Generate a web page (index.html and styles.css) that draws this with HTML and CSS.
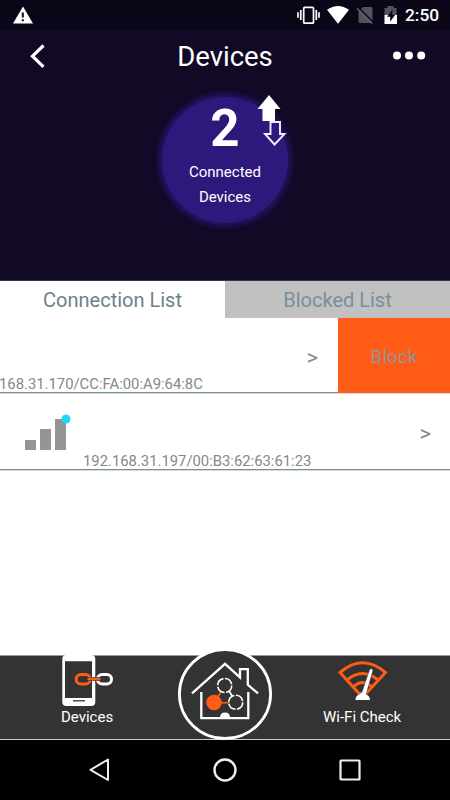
FILE: index.html
```html
<!DOCTYPE html>
<html lang="en">
<head>
<meta charset="utf-8">
<title>Devices</title>
<link rel="stylesheet" href="styles.css">
</head>
<body>
<div class="screen">
  <div class="status">
    <svg class="warn" width="20" height="18" viewBox="0 0 20 18"><path d="M10 .5 20 17.5H0z" fill="#fff"/><path d="M8.800 6.500h2v5h-2zM8.800 13.300h2v2h-2z" fill="#0a0618"/></svg>
    <svg class="tray" width="104" height="20" viewBox="297 5 104 20">
      <g fill="none" stroke="#fff" stroke-width="1.700"><rect x="303.700" y="7.400" width="9.800" height="15.800" rx="1"/><path d="M300.800 10v10M298 12.300v5.500M316.300 10v10M319 12.300v5.500"/></g>
      <path d="M327 9.800Q338 2 349 9.800L338 23.800z" fill="#fff"/>
      <path d="M363 7h8q1.500 0 1.500 1.500V23H360q-1.500 0-1.500-1.500v-10z" fill="#55515f"/><path d="m358 7 15 15" stroke="#0a0618" stroke-width="1.500"/><path d="m357 8.500 15 15" stroke="#625e6b" stroke-width="1.500"/>
      <path d="M384.500 8h3V6h6v2h3v7h-12z" fill="#55515f"/><path d="M384.500 15h12.500v9h-12.500z" fill="#fff"/><path d="m392.500 9.500-5.500 7.200h3.200v5l5-7h-3z" fill="#0a0618"/>
    </svg>
    <span class="clock">2:50</span>
  </div>
  <header class="hero">
    <div class="bar">
      <svg width="15" height="26" viewBox="0 0 15 26"><path d="M13.500 1.500 2.500 12.200 13.500 22.900" fill="none" stroke="#fff" stroke-width="3.200"/></svg>
      <h1>Devices</h1>
      <svg class="more" width="34" height="10" viewBox="0 0 34 10" fill="#fff"><circle cx="5" cy="4.500" r="4"/><circle cx="17" cy="4.500" r="4"/><circle cx="29.200" cy="4.500" r="4"/></svg>
    </div>
    <div class="counter">
      <strong>2</strong>
      <span>Connected</span>
      <span>Devices</span>
      <svg class="arrows" width="32" height="54" viewBox="0 0 32 54"><path d="M12 1 23.500 15H18v12H5.500V15H.5z" fill="#fff"/><path d="M13.500 28H23v12h4.500L17.500 50.500 8 40h5.500z" fill="#2e187c" stroke="#f2edff" stroke-width="1.900"/></svg>
    </div>
  </header>
  <nav class="tabs"><span class="tab">Connection List</span><span class="tab off">Blocked List</span></nav>
  <main>
    <div class="row swiped"><span class="address">168.31.170/CC:FA:00:A9:64:8C</span><span class="arrow">&gt;</span><button class="block">Block</button></div>
    <div class="row">
      <svg class="signal" width="46" height="37" viewBox="0 0 46 37"><path d="M0 26h11v10H0zM15 15h11v21H15zM30 5h11v31H30z" fill="#949494"/><circle cx="41" cy="5" r="4.500" fill="#20d5f5"/></svg>
      <span class="address">192.168.31.197/00:B3:62:63:61:23</span><span class="arrow">&gt;</span>
    </div>
  </main>
  <footer class="dock">
    <div class="item devices">
      <svg width="54" height="52" viewBox="61 655 54 52"><rect x="62.300" y="655" width="33" height="51" rx="4" fill="#fff"/><path d="M65 661.300h27v36.700H65z" fill="#333"/><path d="M73 700.800h12" stroke="#333" stroke-width="1.300"/><g fill="none"><rect x="97.500" y="674.500" width="14" height="9.500" rx="4.700" stroke="#333" stroke-width="5"/><g stroke-width="3"><rect x="76.200" y="674.500" width="14" height="9.500" rx="4.700" stroke="#ff5c17"/><rect x="97.500" y="674.500" width="14" height="9.500" rx="4.700" stroke="#fff"/></g><path d="M87.500 679h13" stroke="#333" stroke-width="3.600"/><path d="M87.500 679h13" stroke="#ff5c17" stroke-width="2.400"/></g></svg>
      <span>Devices</span>
    </div>
    <div class="item check">
      <svg width="54" height="42" viewBox="335 660 54 42"><g fill="none" stroke="#ff5c17" stroke-width="3"><path d="M340 672.500Q362.500 653 385.500 672.500L366 693.500h-7z"/><path d="M347 680q15.500-13 31 0M353.500 686.500q9-8 18 0"/></g><path d="M361 695 369.600 669.500q1.400-2 3.400.6L366 695z" fill="#fff" stroke="#333" stroke-width=".5"/><path d="M355.500 700q0-4.500 4.500-6 2.500-3 5 0 5 1.500 5 6z" fill="#fff"/></svg>
      <span>Wi-Fi Check</span>
    </div>
    <svg class="home" width="96" height="92" viewBox="177 648 96 92">
      <ellipse cx="225" cy="694" rx="45.600" ry="44.500" fill="#333" stroke="#fff" stroke-width="2.800"/>
      <g fill="none" stroke="#fff" stroke-width="2.300"><path d="m192 693.300 33-29.500 15 13.500v-8.200h7.800v15.700l10.200 8.500"/><path d="M201.300 692v26.200h47V692"/></g>
      <path d="M220 717.500q0-5 5-5t5 5z" fill="#fff"/>
      <path d="m214 702.500 8-12m-8 12.200h16" stroke="#ff5c17" stroke-width="1.600"/><path d="m229 691 3.500 5.500" stroke="#fff" stroke-width="1.800"/>
      <circle cx="214" cy="702.500" r="7.800" fill="#ff5c17"/>
      <g fill="#333" stroke="#fff" stroke-width="1.600" stroke-dasharray="9.400 1.600"><circle cx="224.700" cy="685.500" r="7"/><circle cx="235.700" cy="702.300" r="7"/></g>
    </svg>
  </footer>
  <div class="system">
    <svg width="24" height="26" viewBox="0 0 24 26"><path d="M20 2.500v20.500L2.500 12.800z" fill="none" stroke="#eee" stroke-width="2" stroke-linejoin="round"/></svg>
    <svg width="26" height="26" viewBox="0 0 26 26"><circle cx="13" cy="13" r="10.500" fill="none" stroke="#eee" stroke-width="2.400"/></svg>
    <svg width="24" height="26" viewBox="0 0 24 26"><rect x="2.500" y="3.500" width="19" height="19" rx=".6" fill="none" stroke="#eee" stroke-width="2.200"/></svg>
  </div>
</div>
</body>
</html>
```
FILE: styles.css
```css
* { box-sizing: border-box; }
body { margin: 0; font-family: Roboto, sans-serif; background: #fff; }
svg { display: block; flex: none; }
.screen { width: 450px; height: 800px; display: flex; flex-direction: column; overflow: hidden; }
.status { height: 30px; flex: none; background: #0a0618; color: #fff; display: flex; align-items: center; padding: 0 10px 0 13px; }
.tray { margin-left: auto; }
.clock { width: 35px; margin-left: 4px; font-size: 17.3px; font-weight: 500; line-height: 31px; }
.hero { height: 251px; flex: none; background: #120927; border-bottom: 1px solid #3a3640; }
.bar { height: 53px; display: grid; grid-template-columns: 15px 1fr 34px; align-items: center; padding: 0 24px 0 30px; color: #fff; }
.bar h1 { margin: 0 0 0 13px; text-align: center; font-size: 27.5px; font-weight: 400; line-height: 53px; }
.more { margin-top: -2px; }
.counter { position: relative; width: 126px; height: 126px; margin: 14px auto 0; border-radius: 50%; background: #2e187c; box-shadow: 0 0 5px 4px #23125d; color: #fff; display: flex; flex-direction: column; align-items: center; }
.counter strong { font-size: 51px; line-height: 62px; height: 62px; margin-top: 1px; }
.counter span { font-size: 15px; line-height: 25px; }
.arrows { position: absolute; left: 95px; top: -3px; }
.tabs { height: 37px; flex: none; display: grid; grid-template-columns: 1fr 1fr; }
.tab { height: 37px; text-align: center; font-size: 20px; line-height: 38px; color: #6c828b; }
.tab.off { background: #c1c1c1; color: #78909c; }
.row { height: 77px; display: flex; border-bottom: 1px solid #78909c; box-shadow: 0 1px #d3dade; color: #888; }
.row.swiped { height: 75px; }
.address { align-self: flex-end; font-size: 14.83px; line-height: 16px; white-space: nowrap; }
.swiped .address { margin-left: -1px; }
.arrow { margin-left: auto; font-size: 22px; line-height: 81px; margin-right: 19px; }
.swiped .arrow { line-height: 79px; margin-right: 20px; }
.block { width: 112px; height: 75px; flex: none; border: 0; background: #ff5c17; color: #949494; font: 19px Roboto, sans-serif; padding: 2px 0 0; }
.signal { margin: 21px 12px 0 25px; }
.dock { position: relative; height: 85px; flex: none; margin-top: auto; background: #333; border-top: 1px solid #999; border-bottom: 1px solid #ccc; display: flex; justify-content: space-between; color: #fff; }
.item { display: flex; flex-direction: column; font-size: 15px; line-height: 20px; }
.devices { width: 80px; margin-left: 61px; }
.devices svg { margin-top: -1px; }
.check { width: 90px; margin-right: 37px; }
.check svg { margin: 4px 0 5px 12px; }
.home { position: absolute; left: 177px; top: -8px; }
.system { height: 60px; flex: none; background: #000; display: grid; grid-template-columns: repeat(3, 125px); justify-content: center; align-items: center; justify-items: center; }
```
